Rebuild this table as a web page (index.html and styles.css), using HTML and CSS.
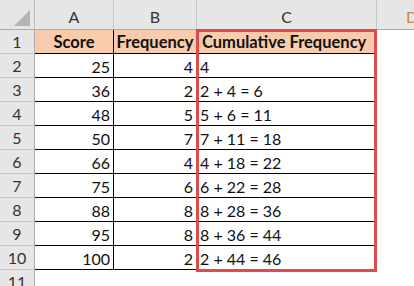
FILE: index.html
```html
<!DOCTYPE html>
<html>
<head>
<meta charset="utf-8">
<link rel="stylesheet" href="styles.css">
</head>
<body>
<div class="sheet">
  <div class="grid">
    <div class="corner"><span class="tri"></span></div>
    <div class="colhead">A</div>
    <div class="colhead">B</div>
    <div class="colhead">C</div>
    <div class="colhead last">D</div>

    <div class="rowhead">1</div>
    <div class="cell hdr">Score</div>
    <div class="cell hdr">Frequency</div>
    <div class="cell hdr left">Cumulative Frequency</div>
    <div class="blank"></div>

    <div class="rowhead">2</div>
    <div class="cell num">25</div>
    <div class="cell num">4</div>
    <div class="cell">4</div>
    <div class="blank"></div>

    <div class="rowhead">3</div>
    <div class="cell num">36</div>
    <div class="cell num">2</div>
    <div class="cell">2 + 4 = 6</div>
    <div class="blank"></div>

    <div class="rowhead">4</div>
    <div class="cell num">48</div>
    <div class="cell num">5</div>
    <div class="cell">5 + 6 = 11</div>
    <div class="blank"></div>

    <div class="rowhead">5</div>
    <div class="cell num">50</div>
    <div class="cell num">7</div>
    <div class="cell">7 + 11 = 18</div>
    <div class="blank"></div>

    <div class="rowhead">6</div>
    <div class="cell num">66</div>
    <div class="cell num">4</div>
    <div class="cell">4 + 18 = 22</div>
    <div class="blank"></div>

    <div class="rowhead">7</div>
    <div class="cell num">75</div>
    <div class="cell num">6</div>
    <div class="cell">6 + 22 = 28</div>
    <div class="blank"></div>

    <div class="rowhead">8</div>
    <div class="cell num">88</div>
    <div class="cell num">8</div>
    <div class="cell">8 + 28 = 36</div>
    <div class="blank"></div>

    <div class="rowhead">9</div>
    <div class="cell num">95</div>
    <div class="cell num">8</div>
    <div class="cell">8 + 36 = 44</div>
    <div class="blank"></div>

    <div class="rowhead">10</div>
    <div class="cell num">100</div>
    <div class="cell num">2</div>
    <div class="cell">2 + 44 = 46</div>
    <div class="blank"></div>

    <div class="rowhead">11</div>
    <div class="blank"></div>
    <div class="blank"></div>
    <div class="blank"></div>
    <div class="blank"></div>
  </div>
  <div class="highlight"></div>
</div>
</body>
</html>
```

FILE: styles.css
```css
html, body {
  margin: 0;
  padding: 0;
  background: #ffffff;
  overflow: hidden;
}

.sheet {
  position: relative;
  width: 414px;
  height: 286px;
  overflow: hidden;
  font-family: Lato, "Open Sans", sans-serif;
  font-size: 16px;
  color: #111111;
}

.grid {
  display: grid;
  grid-template-columns: 35px 79px 83px 180px 70px;
  grid-template-rows: 30px repeat(11, 24px);
}

.corner {
  position: relative;
  background: #e6e6e6;
  border-right: 1px solid #bdbdbd;
  border-bottom: 1px solid #ababab;
}

.tri {
  position: absolute;
  right: 4px;
  bottom: 3px;
  width: 0;
  height: 0;
  border-left: 16px solid transparent;
  border-bottom: 16px solid #b4b4b4;
}

.colhead {
  background: #e6e6e6;
  border-right: 1px solid #c6c6c6;
  border-bottom: 1px solid #ababab;
  display: flex;
  align-items: center;
  justify-content: center;
  padding-top: 4px;
  font-size: 16px;
  color: #333333;
}

.colhead.last {
  border-right: none;
  color: #c98a4a;
}

.rowhead {
  background: #e6e6e6;
  border-right: 1px solid #ababab;
  border-bottom: 1px solid #c6c6c6;
  display: flex;
  align-items: center;
  justify-content: center;
  font-size: 16px;
  color: #333333;
}

.cell {
  border-right: 1px solid #000000;
  border-bottom: 1px solid #000000;
  display: flex;
  align-items: center;
  padding: 1px 3px 0 3px;
  white-space: nowrap;
  overflow: hidden;
}

.cell.num {
  justify-content: flex-end;
}

.cell.hdr {
  background: #f8cbad;
  font-weight: 700;
  font-size: 16.5px;
  justify-content: center;
  padding-left: 1px;
  padding-right: 1px;
}

.cell.hdr.left {
  justify-content: flex-start;
  padding-left: 5px;
}

.blank {
  background: #ffffff;
}

.highlight {
  position: absolute;
  left: 196px;
  top: 29px;
  width: 175px;
  height: 237px;
  border: 3px solid #de4b4b;
}
```
